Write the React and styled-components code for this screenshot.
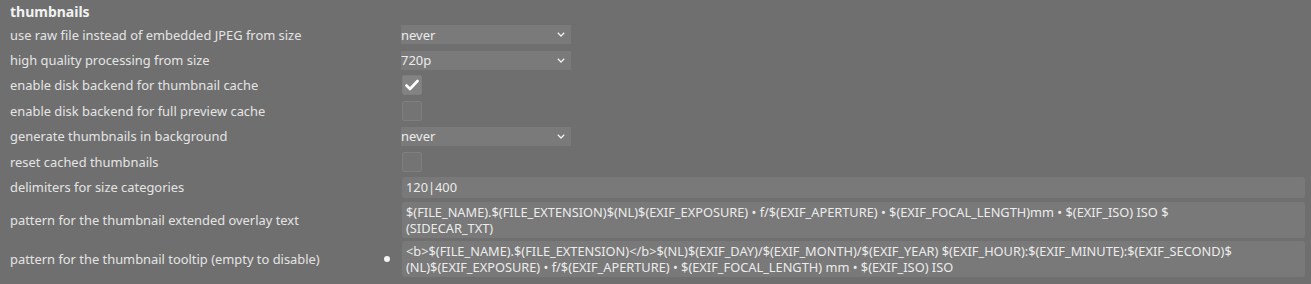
import React from 'react';
import styled, { createGlobalStyle } from 'styled-components';

const Global = createGlobalStyle`
  html, body { margin: 0; padding: 0; background: #6f6f6f; }
  body { font-family: "Noto Sans", "DejaVu Sans", sans-serif; color: #e4e4e4; }
`;

const Page = styled.div`
  width: 1311px;
  height: 284px;
  padding: 0 6px 0 10px;
  box-sizing: border-box;
  overflow: hidden;
`;

const Title = styled.div`
  height: 22px;
  display: flex;
  align-items: center;
  font-size: 14px;
  font-weight: 700;
  color: #f2f2f2;
`;

const Row = styled.div`
  display: grid;
  grid-template-columns: 391px 1fr;
  align-items: center;
  height: ${p => p.h || 25.4}px;
`;

const Label = styled.div`
  display: flex;
  align-items: center;
  justify-content: space-between;
  font-size: 12.9px;
  white-space: nowrap;
`;

const Dot = styled.span`
  width: 6px;
  height: 6px;
  border-radius: 50%;
  background: #f4f4f4;
  margin-right: 11px;
`;

const Select = styled.div`
  width: 170px;
  height: 19px;
  background: #7a7a7a;
  display: flex;
  align-items: center;
  justify-content: space-between;
  font-size: 13px;
  color: #ececec;
  padding-right: 6px;
  box-sizing: border-box;
`;

const Check = styled.div`
  width: 20px;
  height: 20px;
  margin-left: 1px;
  box-sizing: border-box;
  border: 1px solid #7e7e7e;
  border-radius: 2px;
  background: ${p => (p.on ? '#838383' : '#747474')};
  display: flex;
  align-items: center;
  justify-content: center;
`;

const Field = styled.div`
  margin-left: 1px;
  height: ${p => p.h}px;
  background: #797979;
  border-radius: 3px;
  padding: 0 4px;
  box-sizing: border-box;
  display: flex;
  flex-direction: column;
  justify-content: center;
  font-size: 12.8px;
  line-height: 16px;
  color: #ececec;
  white-space: nowrap;
  overflow: hidden;
`;

const Chevron = () => (
  <svg width="8" height="5" viewBox="0 0 8 5">
    <path d="M0.8 0.8 L4 4 L7.2 0.8" fill="none" stroke="#f0f0f0" strokeWidth="1.3" />
  </svg>
);

const Tick = () => (
  <svg width="14" height="12" viewBox="0 0 14 12">
    <path d="M1.5 6.5 L5 10 L12.5 2" fill="none" stroke="#ffffff" strokeWidth="2.6" strokeLinecap="round" strokeLinejoin="round" />
  </svg>
);

const Drop = ({ value }) => (
  <Select>
    <span>{value}</span>
    <Chevron />
  </Select>
);

export default function App() {
  return (
    <Page>
      <Global />
      <Title>thumbnails</Title>
      <Row>
        <Label>use raw file instead of embedded JPEG from size</Label>
        <Drop value="never" />
      </Row>
      <Row>
        <Label>high quality processing from size</Label>
        <Drop value="720p" />
      </Row>
      <Row>
        <Label>enable disk backend for thumbnail cache</Label>
        <Check on><Tick /></Check>
      </Row>
      <Row>
        <Label>enable disk backend for full preview cache</Label>
        <Check />
      </Row>
      <Row>
        <Label>generate thumbnails in background</Label>
        <Drop value="never" />
      </Row>
      <Row>
        <Label>reset cached thumbnails</Label>
        <Check />
      </Row>
      <Row>
        <Label>delimiters for size categories</Label>
        <Field h={21}>120|400</Field>
      </Row>
      <Row h={40}>
        <Label>pattern for the thumbnail extended overlay text</Label>
        <Field h={36}>
          <div>$(FILE_NAME).$(FILE_EXTENSION)$(NL)$(EXIF_EXPOSURE) • f/$(EXIF_APERTURE) • $(EXIF_FOCAL_LENGTH)mm • $(EXIF_ISO) ISO $</div>
          <div>(SIDECAR_TXT)</div>
        </Field>
      </Row>
      <Row h={39}>
        <Label>pattern for the thumbnail tooltip (empty to disable)<Dot /></Label>
        <Field h={36}>
          <div>{'<b>$(FILE_NAME).$(FILE_EXTENSION)</b>$(NL)$(EXIF_DAY)/$(EXIF_MONTH)/$(EXIF_YEAR) $(EXIF_HOUR):$(EXIF_MINUTE):$(EXIF_SECOND)$'}</div>
          <div>(NL)$(EXIF_EXPOSURE) • f/$(EXIF_APERTURE) • $(EXIF_FOCAL_LENGTH) mm • $(EXIF_ISO) ISO</div>
        </Field>
      </Row>
    </Page>
  );
}
